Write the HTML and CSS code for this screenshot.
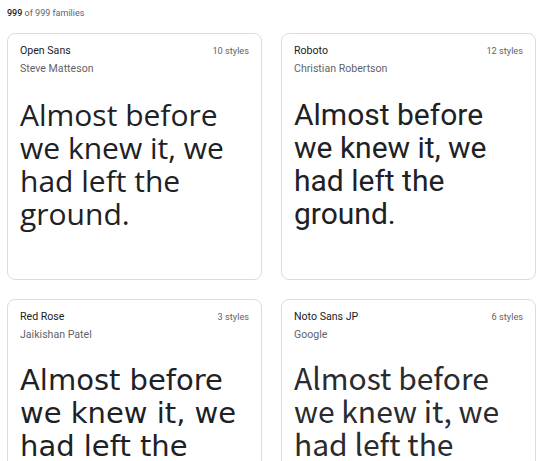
FILE: index.html
```html
<!DOCTYPE html>
<html>
<head>
<meta charset="utf-8">
<link rel="stylesheet" href="styles.css">
</head>
<body>
<div class="page">
  <div class="count"><span class="num">999</span> of 999 families</div>
  <div class="grid">
    <div class="card">
      <div class="head"><span class="name">Open Sans</span><span class="styles">10 styles</span></div>
      <div class="author">Steve Matteson</div>
      <div class="sample f-open">Almost before we knew it, we had left the ground.</div>
    </div>
    <div class="card">
      <div class="head"><span class="name">Roboto</span><span class="styles">12 styles</span></div>
      <div class="author">Christian Robertson</div>
      <div class="sample f-roboto">Almost before we knew it, we had left the ground.</div>
    </div>
    <div class="card">
      <div class="head"><span class="name">Red Rose</span><span class="styles">3 styles</span></div>
      <div class="author">Jaikishan Patel</div>
      <div class="sample f-redrose">Almost before we knew it, we had left the ground.</div>
    </div>
    <div class="card">
      <div class="head"><span class="name">Noto Sans JP</span><span class="styles">6 styles</span></div>
      <div class="author">Google</div>
      <div class="sample f-noto">Almost before we knew it, we had left the ground.</div>
    </div>
  </div>
</div>
</body>
</html>
```
FILE: styles.css
```css
html, body {
  margin: 0;
  padding: 0;
  background: #ffffff;
}
body {
  font-family: Roboto, "Liberation Sans", sans-serif;
  color: #202124;
  overflow: hidden;
}
.page {
  padding: 6px 11px 0 7px;
}
.count {
  font-size: 9px;
  line-height: 14px;
  color: #5f6368;
}
.count .num {
  color: #202124;
  font-weight: 500;
}
.grid {
  margin-top: 13px;
  display: grid;
  grid-template-columns: 255px 255px;
  column-gap: 19px;
  row-gap: 19px;
}
.card {
  height: 247px;
  box-sizing: border-box;
  border: 1px solid #dadce0;
  border-radius: 8px;
  padding: 8px 12px 0 12px;
  overflow: hidden;
}
.head {
  display: flex;
  justify-content: space-between;
  align-items: baseline;
  line-height: 18px;
}
.name {
  font-size: 10.6px;
  color: #202124;
}
.styles {
  font-size: 9.2px;
  color: #5f6368;
}
.author {
  font-size: 10.6px;
  line-height: 18px;
  color: #5f6368;
}
.sample {
  margin-top: 20px;
  font-size: 30px;
  line-height: 33px;
  color: #202124;
}
.f-open { font-family: "Open Sans", sans-serif; }
.f-roboto { font-family: Roboto, sans-serif; }
.f-redrose { font-family: "DejaVu Sans", sans-serif; font-size: 29px; }
.f-noto { font-family: "Noto Sans CJK JP", sans-serif; font-size: 30px; margin-top: 17px; color: #2a2b2e; }
```
